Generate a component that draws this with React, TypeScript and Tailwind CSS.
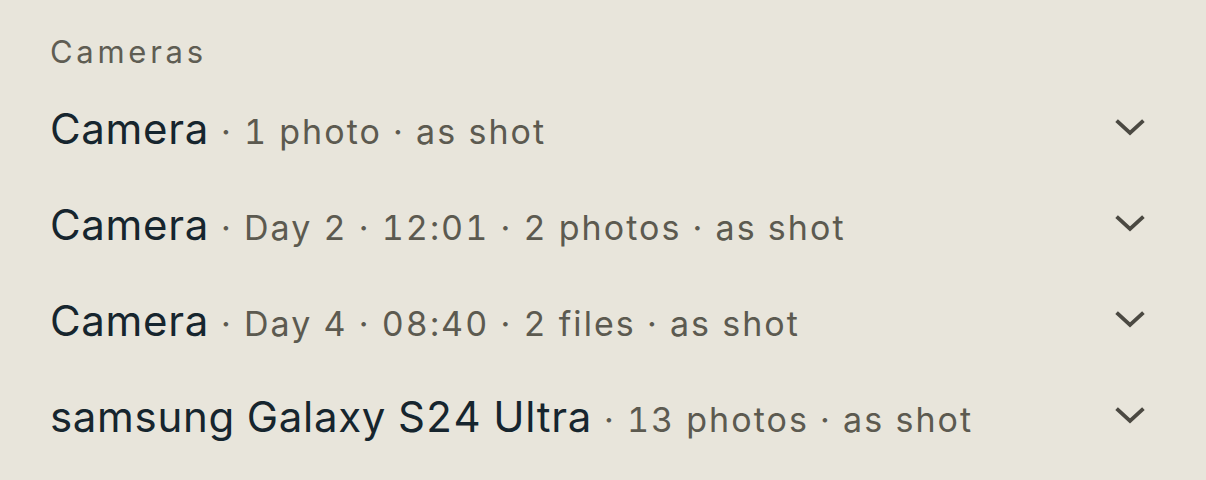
import React from "react";

const rows = [
  { name: "Camera", meta: "1 photo · as shot" },
  { name: "Camera", meta: "Day 2 · 12:01 · 2 photos · as shot" },
  { name: "Camera", meta: "Day 4 · 08:40 · 2 files · as shot" },
  { name: "samsung Galaxy S24 Ultra", meta: "13 photos · as shot" },
];

function Chevron() {
  return (
    <svg width="32" height="32" viewBox="0 0 32 32" fill="none" className="shrink-0">
      <path d="M4 10 L16 21 L28 10" stroke="#4b4942" strokeWidth="3.8" strokeLinecap="square" strokeLinejoin="miter" />
    </svg>
  );
}

export default function App() {
  return (
    <div
      className="w-[1206px] h-[480px] bg-[#e8e5db] pl-[50px] pr-[60px] pt-[30px]"
      style={{ fontFamily: "Inter, 'Noto Sans', sans-serif" }}
    >
      <div className="text-[31px] leading-[44px] tracking-[0.12em] text-[#5f5d53]">Cameras</div>
      <div className="flex flex-col mt-[6px]">
        {rows.map((r, i) => (
          <div key={i} className="flex items-center justify-between h-[96px]">
            <div className="flex items-baseline whitespace-nowrap tabular-nums">
              <span className="text-[42px] text-[#16252e] tracking-[0.016em]">{r.name}</span>
              <span className="text-[34px] text-[#5c5a50] tracking-[0.06em] ml-[12px]">· {r.meta}</span>
            </div>
            <Chevron />
          </div>
        ))}
      </div>
    </div>
  );
}
